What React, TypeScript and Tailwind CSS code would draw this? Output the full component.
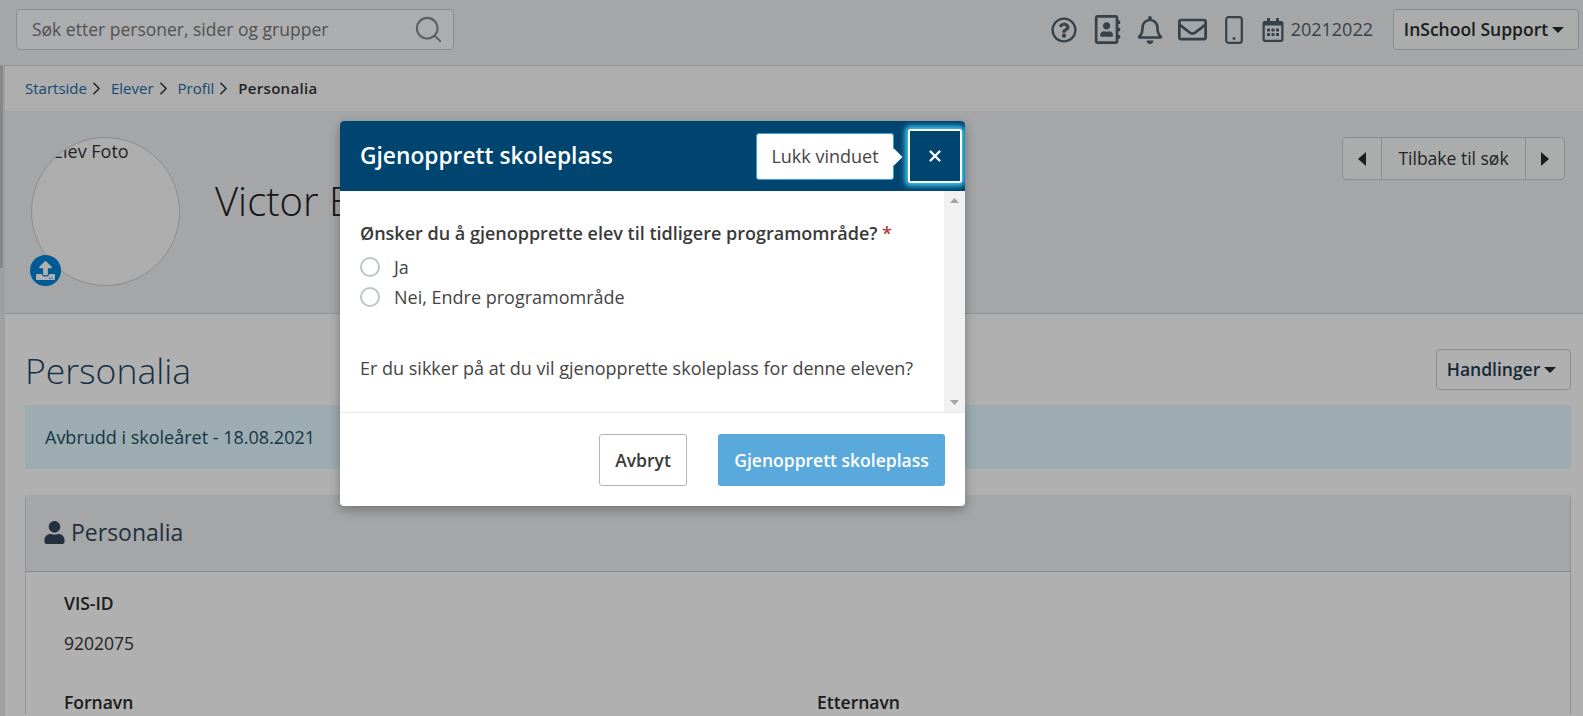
import { ChevronRight, Search, X } from 'lucide-react'
import {
  FaRegAddressBook,
  FaRegBell,
  FaRegCalendarAlt,
  FaRegEnvelope,
  FaRegQuestionCircle,
  FaUpload,
  FaUser,
} from 'react-icons/fa'

function Caret({ dir = 'down' }: { dir?: 'down' | 'left' | 'right' }) {
  const points = dir === 'down' ? '0,0 12,0 6,6' : dir === 'left' ? '8,0 8,14 0,7' : '0,0 8,7 0,14'
  const size = dir === 'down' ? { width: 12, height: 6 } : { width: 8, height: 14 }
  return (
    <svg {...size} className="shrink-0 text-[#2b2b2b]" fill="currentColor">
      <polygon points={points} />
    </svg>
  )
}

function PhoneIcon() {
  return (
    <svg width="18" height="28" viewBox="0 0 18 28" fill="none" className="ml-[18px]">
      <rect x="1.2" y="1.2" width="15.6" height="25.6" rx="2.4" stroke="currentColor" strokeWidth="2.2" />
      <circle cx="9" cy="22.5" r="1.4" fill="currentColor" />
    </svg>
  )
}

function TopBar() {
  return (
    <header className="h-[66px] flex items-start border-b border-[#d3d6d9] bg-[#eff1f3] pl-[16px] pr-1 pt-2">
      <div className="w-[438px] h-[41px] flex items-center justify-between rounded border border-[#c8ccd1] bg-white/70 pl-[15px] pr-[9px] mt-px">
        <span className="text-[17.5px] text-[#777]">Søk etter personer, sider og grupper</span>
        <Search size={31} strokeWidth={1.6} className="text-[#888]" />
      </div>
      <div className="ml-auto flex items-center text-[#4f5f6c] h-[41px] mt-px">
        <FaRegQuestionCircle size={26} />
        <FaRegAddressBook size={29} className="ml-[16px]" />
        <FaRegBell size={28} className="ml-[14px]" />
        <FaRegEnvelope size={29} className="ml-[14px]" />
        <PhoneIcon />
        <FaRegCalendarAlt size={24} className="ml-[18px]" />
        <span className="ml-[6px] text-[18px] font-medium">20212022</span>
        <button className="ml-[20px] w-[186px] h-[41px] flex items-center justify-center gap-1 rounded border border-[#c8ccd1] bg-[#f8f9fa] pr-[4px] text-[17.5px] font-semibold text-[#2b2b2b]">
          InSchool Support
          <Caret />
        </button>
      </div>
    </header>
  )
}

function Breadcrumb() {
  const links = ['Startside', 'Elever', 'Profil']
  return (
    <nav className="h-[45px] flex items-center bg-[#fbfbfb] pl-5 text-[15px]">
      {links.map((link) => (
        <span key={link} className="flex items-center mr-[4px]">
          <span className="text-[#1c6aa8]">{link}</span>
          <ChevronRight size={21} strokeWidth={1.8} className="text-[#333] -ml-px" />
        </span>
      ))}
      <span className="font-semibold tracking-[0.3px] text-[#333]">Personalia</span>
    </nav>
  )
}

function Hero() {
  return (
    <section className="h-[203px] flex items-start bg-[#eff1f3] border-b border-[#d3d6d9] pl-[26px] pr-[18px] pt-[26px]">
      <div className="relative w-[149px] h-[149px] shrink-0">
        <div className="w-full h-full overflow-hidden rounded-full border border-[#ccc] bg-[#fbfbfb] text-[18px] text-[#333]">
          <span className="block pl-[21px] leading-[26px]">Elev Foto</span>
        </div>
        <div className="absolute -left-px bottom-0 w-[31px] h-[31px] rounded-full bg-[#0083d6] flex items-center justify-center">
          <FaUpload size={19} className="text-white" />
        </div>
      </div>
      <h1 className="ml-[35px] mt-[37px] text-[40px] leading-[54px] font-light text-[#222] whitespace-nowrap">Victor Eriksen</h1>
      <div className="ml-auto h-[43px] w-[223px] flex items-stretch rounded border border-[#c8ccd1] bg-[#f8f9fa] text-[17.5px] text-[#333]">
        <span className="w-[39px] flex items-center justify-center border-r border-[#c8ccd1]">
          <Caret dir="left" />
        </span>
        <span className="flex-1 flex items-center justify-center">Tilbake til søk</span>
        <span className="w-[39px] flex items-center justify-center border-l border-[#c8ccd1]">
          <Caret dir="right" />
        </span>
      </div>
    </section>
  )
}

function Field({ label, value }: { label: string; value?: string }) {
  return (
    <div>
      <div className="text-[17.5px] font-semibold leading-6 text-[#2b2b2b]">{label}</div>
      {value && <div className="mt-4 text-[17.5px] leading-6 text-[#333]">{value}</div>}
    </div>
  )
}

function Content() {
  return (
    <main className="bg-[#fff] pl-[20px] pr-[12px]">
      <div className="flex items-start justify-between pt-[33px] h-[92px]">
        <h2 className="text-[35.5px] font-light leading-[46px] text-[#1d4766]">Personalia</h2>
        <button className="w-[135px] h-[41px] flex items-center justify-center gap-1 rounded border border-[#c8ccd1] pr-[4px] text-[17.5px] font-semibold text-[#1f3b54] mt-[2px]">
          Handlinger
          <Caret />
        </button>
      </div>
      <div className="mt-[-1px] h-[64px] flex items-center rounded bg-[#e2faff] pl-[20px] text-[18px] text-[#1d4f68]">
        Avbrudd i skoleåret - 18.08.2021
      </div>
      <section className="mt-[26px] rounded-t border-x border-[#d3d6d9]">
        <div className="h-[77px] flex items-center gap-[5px] rounded-t bg-[#eff1f3] border-b border-[#c2c8cd] pl-[17px] pb-[2px] text-[23px] text-[#33475a]">
          <FaUser size={23} />
          Personalia
        </div>
        <div className="pl-[38px] pt-[19px]">
          <Field label="VIS-ID" value="9202075" />
          <div className="grid grid-cols-2 mt-[35px]">
            <Field label="Fornavn" />
            <Field label="Etternavn" />
          </div>
        </div>
      </section>
    </main>
  )
}

function RestoreModal() {
  return (
    <div className="absolute left-[340px] top-[121px] w-[625px] rounded-sm overflow-hidden bg-white shadow-[0_4px_12px_rgba(0,0,0,0.3)]">
      <div className="h-[70px] flex items-center justify-between bg-[#00456f] pl-[20px] pr-[3px]">
        <span className="text-[22.75px] font-semibold text-white">Gjenopprett skoleplass</span>
        <div className="flex items-center">
          <div className="relative w-[138px] h-[47px] flex items-center justify-center rounded-[3px] bg-white border border-[#3aa0d8] text-[18px] text-[#444]">
            Lukk vinduet
            <span className="absolute -right-[7px] top-[17px] w-[12px] h-[12px] rotate-45 bg-white" />
          </div>
          <button className="ml-[14px] w-[54px] h-[54px] flex items-center justify-center rounded-[2px] border-2 border-white shadow-[0_0_5px_3px_#3cc4f0] text-white">
            <X size={18} strokeWidth={3} />
          </button>
        </div>
      </div>
      <div className="h-[222px] flex border-b border-[#e8e8e8]">
        <div className="flex-1 pl-[20px] pt-[30px] text-[18px] leading-6 text-[#444]">
          <div className="font-semibold text-[#3a3a3a] whitespace-nowrap">
            Ønsker du å gjenopprette elev til tidligere programområde? <span className="text-[#b33a3a]">*</span>
          </div>
          <label className="mt-[7px] flex items-center h-[30px] gap-[14px]">
            <span className="w-5 h-5 rounded-full border-2 border-[#bcc5cc]" />
            Ja
          </label>
          <label className="flex items-center h-[30px] gap-[14px]">
            <span className="w-5 h-5 rounded-full border-2 border-[#bcc5cc]" />
            Nei, Endre programområde
          </label>
          <p className="mt-[44px] whitespace-nowrap">Er du sikker på at du vil gjenopprette skoleplass for denne eleven?</p>
        </div>
        <div className="w-[21px] flex flex-col items-center justify-between bg-[#f1f1f1] py-[7px]">
          <svg width="9" height="5" className="text-[#a3a3a3]" fill="currentColor"><polygon points="0,5 9,5 4.5,0" /></svg>
          <svg width="9" height="5" className="text-[#a3a3a3]" fill="currentColor"><polygon points="0,0 9,0 4.5,5" /></svg>
        </div>
      </div>
      <div className="h-[93px] flex items-start justify-end gap-[31px] pr-5 pt-[21px]">
        <button className="w-[88px] h-[52px] rounded-[3px] border border-[#b5b5b5] text-[17.5px] font-semibold text-[#3a3a3a]">Avbryt</button>
        <button className="w-[227px] h-[52px] rounded-[3px] bg-[#5aa9dd] text-[17.5px] font-semibold text-white">Gjenopprett skoleplass</button>
      </div>
    </div>
  )
}

export default function App() {
  return (
    <div className="relative h-[716px] overflow-hidden bg-white font-['Open_Sans',sans-serif]">
      <div className="flex h-full">
        <aside className="w-[5px] shrink-0 bg-[#e6e6e6] pt-[17px]">
          <div className="w-[3px] h-[251px] bg-[#c4c4c4]" />
        </aside>
        <div className="flex-1 min-w-0 -ml-[5px]">
          <TopBar />
          <div className="pl-[5px]">
            <Breadcrumb />
            <Hero />
            <Content />
          </div>
        </div>
      </div>
      {/* dim layer under the dialog */}
      <div className="absolute inset-0 bg-black/[0.31]" />
      <RestoreModal />
    </div>
  )
}
